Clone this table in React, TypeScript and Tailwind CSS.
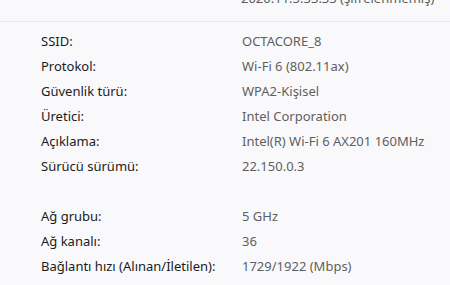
export default function App() {
  const rows: ([string, string] | null)[] = [
    ["SSID:", "OCTACORE_8"],
    ["Protokol:", "Wi-Fi 6 (802.11ax)"],
    ["Güvenlik türü:", "WPA2-Kişisel"],
    ["Üretici:", "Intel Corporation"],
    ["Açıklama:", "Intel(R) Wi-Fi 6 AX201 160MHz"],
    ["Sürücü sürümü:", "22.150.0.3"],
    null,
    ["Ağ grubu:", "5 GHz"],
    ["Ağ kanalı:", "36"],
    ["Bağlantı hızı (Alınan/İletilen):", "1729/1922 (Mbps)"],
  ];
  return (
    <div
      className="w-[450px] h-[285px] overflow-hidden bg-[#f9f9fb] text-[13px]"
      style={{ fontFamily: '"Segoe UI", "Noto Sans", sans-serif' }}
    >
      <div className="h-[21px] overflow-hidden pl-[241px]">
        <div className="mt-[-12px] leading-[20px] whitespace-nowrap text-[#5c5c5c]">
          2020.11.5.33.33 (şifrelenmemiş)
        </div>
      </div>
      <div className="h-px bg-[#e8e8ea]" />
      <div className="pt-[7px] pl-[41px]">
        {rows.map((r, i) =>
          r ? (
            <div key={i} className="flex h-[25px] items-center">
              <div className="w-[201px] text-[#1b1b1b]">{r[0]}</div>
              <div className="text-[#5f5f5f]">{r[1]}</div>
            </div>
          ) : (
            <div key={i} className="h-[25px]" />
          )
        )}
      </div>
    </div>
  );
}
